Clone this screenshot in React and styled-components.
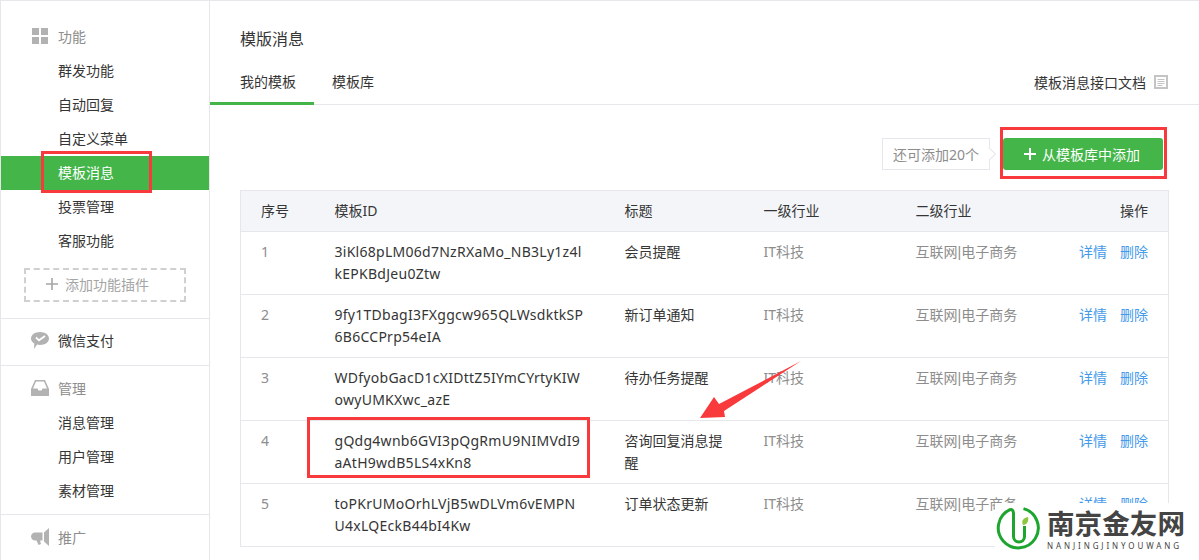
import React from 'react';
import styled, { createGlobalStyle } from 'styled-components';

const GlobalStyle = createGlobalStyle`
  html, body {
    margin: 0;
    padding: 0;
    background: #fff;
  }
  body {
    font-family: "Noto Sans", "Noto Sans CJK SC", sans-serif;
    font-size: 14px;
    color: #353535;
  }
`;

const Page = styled.div`
  position: relative;
  display: flex;
  width: 1199px;
  height: 560px;
  box-sizing: border-box;
  overflow: hidden;
  border-top: 1px solid #e7e7eb;
  border-left: 1px solid #e7e7eb;
`;

const Sidebar = styled.nav`
  flex: none;
  width: 208px;
  border-right: 1px solid #e7e7eb;
`;

const Section = styled.div`
  padding: ${(p) => p.$top}px 0 ${(p) => p.$bottom}px;
  border-bottom: ${(p) => (p.$last ? 'none' : '1px solid #e7e7eb')};
`;

const SectionHead = styled.div`
  display: flex;
  align-items: center;
  box-sizing: border-box;
  height: 34px;
  padding: 0 0 2px 30px;
  color: ${(p) => (p.$link ? '#353535' : '#8d8d8d')};

  svg {
    flex: none;
    width: 18px;
    height: 18px;
    margin-right: 9px;
    fill: #b2b2b2;
  }
`;

const NavItem = styled.a`
  display: flex;
  align-items: center;
  box-sizing: border-box;
  height: 34px;
  padding: 0 0 2px 57px;
  color: ${(p) => (p.$active ? '#fff' : '#353535')};
  background: ${(p) => (p.$active ? '#44b549' : 'transparent')};
`;

const AddPlugin = styled.div`
  display: flex;
  align-items: center;
  box-sizing: border-box;
  width: 162px;
  height: 34px;
  margin: 10px 0 0 23px;
  padding: 0 0 2px 20px;
  border: 2px dashed #d0d0d0;
  color: #a5a5a5;

  svg {
    width: 12px;
    height: 12px;
    margin-right: 7px;
    stroke: #a5a5a5;
    stroke-width: 1.6;
  }
`;

const Main = styled.main`
  flex: 1;
  min-width: 0;
`;

const Title = styled.h2`
  margin: 0;
  padding: 27px 0 0 30px;
  font-size: 16px;
  font-weight: 400;
  line-height: 22px;
`;

const TabBar = styled.div`
  display: flex;
  align-items: stretch;
  height: 44px;
  margin-top: 10px;
  border-bottom: 1px solid #e7e7eb;
`;

const Tab = styled.a`
  display: flex;
  align-items: center;
  box-sizing: border-box;
  height: 45px;
  padding: 0 18px;
  border-bottom: 3px solid ${(p) => (p.$active ? '#44b549' : 'transparent')};

  &:first-child {
    padding-left: 30px;
  }
`;

const DocLink = styled.a`
  display: flex;
  align-items: center;
  height: 44px;
  margin-left: auto;
  padding-right: 31px;

  svg {
    width: 14px;
    height: 14px;
    margin-left: 8px;
  }
`;

const Toolbar = styled.div`
  display: flex;
  justify-content: flex-end;
  align-items: center;
  height: 32px;
  margin: 33px 36px 20px 0;
`;

const Remain = styled.div`
  position: relative;
  box-sizing: border-box;
  display: flex;
  align-items: center;
  justify-content: center;
  width: 108px;
  height: 32px;
  margin-right: 13px;
  border: 1px solid #e7e7eb;
  color: #8d8d8d;

  &::after {
    content: '';
    position: absolute;
    right: -5px;
    top: 10px;
    width: 9px;
    height: 9px;
    background: #fff;
    border-top: 1px solid #e7e7eb;
    border-right: 1px solid #e7e7eb;
    transform: rotate(45deg);
  }
`;

const AddButton = styled.button`
  display: flex;
  align-items: center;
  justify-content: center;
  width: 160px;
  height: 32px;
  padding: 0 2px 0 0;
  border: 0;
  border-radius: 3px;
  background: #44b549;
  color: #fff;
  font: inherit;

  svg {
    width: 12px;
    height: 12px;
    margin-right: 6px;
    stroke: #fff;
    stroke-width: 2;
  }
`;

const Table = styled.table`
  width: 929px;
  margin-left: 30px;
  border-collapse: collapse;
  table-layout: fixed;
  border: 1px solid #e7e7eb;
`;

const Th = styled.th`
  height: 41px;
  box-sizing: border-box;
  padding: 0 ${(p) => (p.$right ? '20px' : '0')} 3px 20px;
  background: #f4f5f9;
  font-weight: 400;
  text-align: ${(p) => (p.$right ? 'right' : 'left')};
  border-bottom: 1px solid #e7e7eb;
`;

const Td = styled.td`
  height: 63px;
  box-sizing: border-box;
  padding: 9px 20px;
  vertical-align: top;
  line-height: 22px;
  color: ${(p) => (p.$muted ? '#8d8d8d' : '#353535')};
  border-bottom: 1px solid #e7e7eb;
`;

const IdCell = styled(Td)`
  letter-spacing: 0.27px;
  white-space: nowrap;
`;

const Pipe = styled.span`
  font-family: "Liberation Sans", sans-serif;
`;

const OpsCell = styled(Td)`
  padding-left: 0;
  text-align: right;
  white-space: nowrap;
`;

const OpLink = styled.a`
  margin-left: 13px;
  color: #459ae9;
`;

const Mark = styled.div`
  position: absolute;
  box-sizing: border-box;
  left: ${(p) => p.$x}px;
  top: ${(p) => p.$y}px;
  width: ${(p) => p.$w}px;
  height: ${(p) => p.$h}px;
  border: 3px solid #f83a3d;
`;

const Arrow = styled.svg`
  position: absolute;
  left: 690px;
  top: 350px;
  width: 120px;
  height: 80px;
`;

const Watermark = styled.div`
  position: absolute;
  right: 0;
  bottom: 0;
  width: 204px;
  height: 57px;
  display: flex;
  background: #fff;
`;

const WatermarkLogo = styled.svg`
  flex: none;
  width: 46px;
  height: 46px;
  margin: 2px 6px 0 0;
`;

const WatermarkText = styled.div`
  display: flex;
  flex-direction: column;
`;

const WatermarkName = styled.div`
  margin-top: 3px;
  font-family: "Noto Sans CJK SC", sans-serif;
  font-size: 27.6px;
  font-weight: 700;
  line-height: 33px;
  color: #444;
`;

const WatermarkSub = styled.div`
  font-size: 8px;
  line-height: 14px;
  letter-spacing: 2.9px;
  white-space: nowrap;
  color: #444;
`;

const GridIcon = () => (
  <svg viewBox="0 0 18 18">
    <path d="M1 1h7v7H1zM10 1h7v7h-7zM1 10h7v7H1zM10 10h7v7h-7z" />
  </svg>
);

const WechatIcon = () => (
  <svg viewBox="0 0 18 18">
    <path d="M9 1c5 0 9 2.800 9 6.500S14 14 9 14c-1 0-2-.1-2.900-.4L3 18l.3-5.500C1.300 11.300 0 9.400 0 7.500 0 3.800 4 1 9 1z" />
    <path d="M5 6.500l3 2.800 6-4.300" fill="none" stroke="#fff" strokeWidth="1.800" />
  </svg>
);

const InboxIcon = () => (
  <svg viewBox="0 0 18 18">
    <path d="M4 1h10l4 9v7H0v-7zM5 2.500L2 9.500h4.500l1 2h3l1-2H16l-3-7z" fillRule="evenodd" />
  </svg>
);

const MegaphoneIcon = () => (
  <svg viewBox="0 0 18 18">
    <path d="M4 4.500h7.500v8H9l1 3.500-2.500 1-2-4.500H4c-2.200 0-4-1.800-4-4s1.800-4 4-4zM13 4.500L18 0v18l-5-4.500z" />
  </svg>
);

const PlusIcon = () => (
  <svg viewBox="0 0 12 12">
    <path d="M6 0v12M0 6h12" fill="none" />
  </svg>
);

const DocIcon = () => (
  <svg viewBox="0 0 14 14">
    <path d="M1 1h12v12H1z" fill="#fff" stroke="#c4c4c4" strokeWidth="2" />
    <path d="M3.500 4.500h7M3.500 6.500h7M3.500 8.500h7M3.500 10.500h5" stroke="#c4c4c4" fill="none" />
  </svg>
);

const nav = ['群发功能', '自动回复', '自定义菜单', '模板消息', '投票管理', '客服功能'];
const manage = ['消息管理', '用户管理', '素材管理'];

const rows = [
  { id: ['3iKl68pLM06d7NzRXaMo_NB3Ly1z4l', 'kEPKBdJeu0Ztw'], title: '会员提醒' },
  { id: ['9fy1TDbagI3FXggcw965QLWsdktkSP', '6B6CCPrp54eIA'], title: '新订单通知' },
  { id: ['WDfyobGacD1cXIDttZ5IYmCYrtyKIW', 'owyUMKXwc_azE'], title: '待办任务提醒' },
  { id: ['gQdg4wnb6GVI3pQgRmU9NIMVdI9', 'aAtH9wdB5LS4xKn8'], title: '咨询回复消息提醒' },
  { id: ['toPKrUMoOrhLVjB5wDLVm6vEMPN', 'U4xLQEckB44bI4Kw'], title: '订单状态更新' },
];

export default function App() {
  return (
    <Page>
      <GlobalStyle />
      <Sidebar>
        <Section $top={19} $bottom={16}>
          <SectionHead>
            <GridIcon />
            功能
          </SectionHead>
          {nav.map((name) => (
            <NavItem key={name} $active={name === '模板消息'}>
              {name}
            </NavItem>
          ))}
          <AddPlugin>
            <PlusIcon />
            添加功能插件
          </AddPlugin>
        </Section>
        <Section $top={5} $bottom={7}>
          <SectionHead $link>
            <WechatIcon />
            微信支付
          </SectionHead>
        </Section>
        <Section $top={6} $bottom={6}>
          <SectionHead>
            <InboxIcon />
            管理
          </SectionHead>
          {manage.map((name) => (
            <NavItem key={name}>{name}</NavItem>
          ))}
        </Section>
        <Section $top={6} $bottom={0} $last>
          <SectionHead>
            <MegaphoneIcon />
            推广
          </SectionHead>
        </Section>
      </Sidebar>
      <Main>
        <Title>模版消息</Title>
        <TabBar>
          <Tab $active>我的模板</Tab>
          <Tab>模板库</Tab>
          <DocLink>
            模板消息接口文档
            <DocIcon />
          </DocLink>
        </TabBar>
        <Toolbar>
          <Remain>还可添加20个</Remain>
          <AddButton>
            <PlusIcon />
            从模板库中添加
          </AddButton>
        </Toolbar>
        <Table>
          <colgroup>
            <col style={{ width: 74 }} />
            <col style={{ width: 290 }} />
            <col style={{ width: 139 }} />
            <col style={{ width: 152 }} />
            <col style={{ width: 152 }} />
            <col />
          </colgroup>
          <thead>
            <tr>
              <Th>序号</Th>
              <Th>模板ID</Th>
              <Th>标题</Th>
              <Th>一级行业</Th>
              <Th>二级行业</Th>
              <Th $right>操作</Th>
            </tr>
          </thead>
          <tbody>
            {rows.map((row, i) => (
              <tr key={row.id[0]}>
                <Td $muted>{i + 1}</Td>
                <IdCell>
                  {row.id[0]}
                  <br />
                  {row.id[1]}
                </IdCell>
                <Td>{row.title}</Td>
                <Td $muted>IT科技</Td>
                <Td $muted>
                  互联网<Pipe>|</Pipe>电子商务
                </Td>
                <OpsCell>
                  <OpLink>详情</OpLink>
                  <OpLink>删除</OpLink>
                </OpsCell>
              </tr>
            ))}
          </tbody>
        </Table>
      </Main>

      <Mark $x={40} $y={150} $w={111} $h={42} />
      <Mark $x={999} $y={126} $w={167} $h={52} />
      <Mark $x={306} $y={416} $w={283} $h={61} />
      <Arrow viewBox="690 350 120 80">
        <path d="M699 417L713 396L718 403L800 360L723 410L724 416Z" fill="#f83a3d" />
      </Arrow>
      <Watermark>
        <WatermarkLogo viewBox="0 0 46 46">
          <path
            d="M28.500 3.600A20 20 0 1 1 15 4.700Q18 4 18.500 8V31.500A5.500 5.500 0 0 0 29.500 31.500V21"
            fill="none"
            stroke="#1ea52f"
            strokeWidth="3"
          />
          <path d="M28 20C26 16 28 13 33 12C34 16 32 20 28 20Z" fill="#8cc63f" />
        </WatermarkLogo>
        <WatermarkText>
          <WatermarkName>南京金友网</WatermarkName>
          <WatermarkSub>NANJINGJINYOUWANG</WatermarkSub>
        </WatermarkText>
      </Watermark>
    </Page>
  );
}
